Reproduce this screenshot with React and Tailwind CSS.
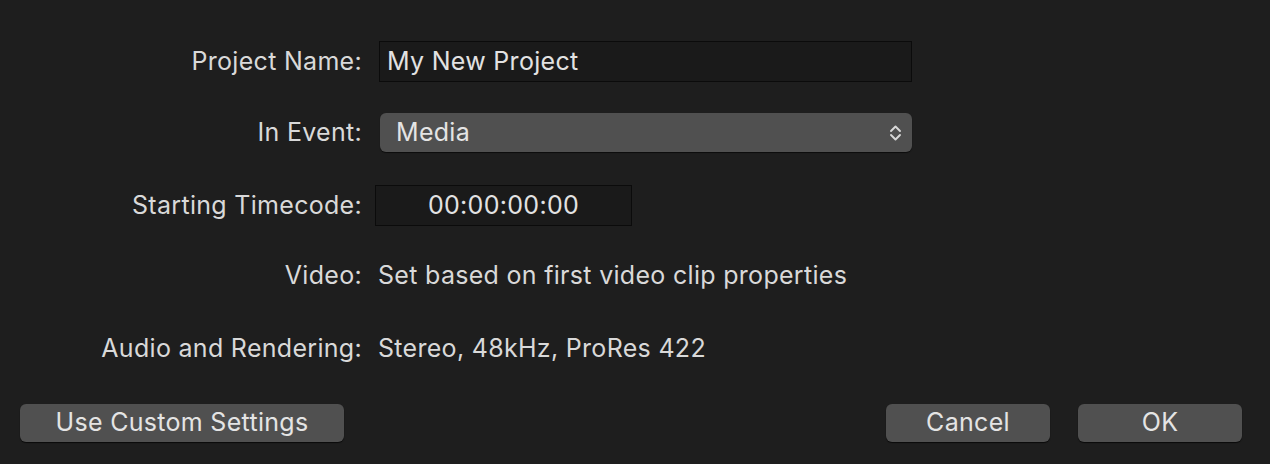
import React from 'react';

const font = { fontFamily: 'Inter, "Noto Sans", sans-serif' };

const Label = ({ children }) => (
  <div className="w-[362px] shrink-0 text-right text-[25px] tracking-[0.3px] text-[#d9d9d9]">{children}</div>
);

const App = () => {
  return (
    <div className="w-[1270px] h-[464px] bg-[#1e1e1e] relative overflow-hidden" style={font}>
      <div className="pt-[41px]">
        <div className="flex items-center h-[41px]">
          <Label>Project Name:</Label>
          <div className="ml-[17px] w-[533px] h-[41px] bg-[#1a1a1a] border border-[#0b0b0b] flex items-center pl-[7px] text-[25px] tracking-[0.3px] text-[#e2e2e2]">
            My New Project
          </div>
        </div>

        <div className="flex items-center h-[39px] mt-[31px]">
          <Label>In Event:</Label>
          <div className="ml-[18px] w-[532px] h-[39px] bg-[#505050] rounded-[6px] shadow-[0_1px_1px_rgba(0,0,0,0.6)] flex items-center justify-between pl-[16px] pr-[10px] text-[25px] tracking-[0.3px] text-[#e4e4e4]">
            <span>Media</span>
            <svg width="13" height="20" viewBox="0 0 13 20" fill="none" stroke="#d8d8d8" strokeWidth="1.9" strokeLinecap="round" strokeLinejoin="round">
              <path d="M2 8l4.5-4.5 4.5 4.5" />
              <path d="M2 12l4.5 4.5 4.5-4.5" />
            </svg>
          </div>
        </div>

        <div className="flex items-center h-[41px] mt-[33px]">
          <Label>Starting Timecode:</Label>
          <div className="ml-[13px] w-[257px] h-[41px] bg-[#1a1a1a] border border-[#0b0b0b] flex items-center justify-center text-[25px] tracking-[0.3px] text-[#e2e2e2]">
            00:00:00:00
          </div>
        </div>

        <div className="flex items-center h-[40px] mt-[30px]">
          <Label>Video:</Label>
          <div className="ml-[16px] text-[25px] tracking-[0.3px] text-[#d9d9d9]">Set based on first video clip properties</div>
        </div>

        <div className="flex items-center h-[40px] mt-[33px]">
          <Label>Audio and Rendering:</Label>
          <div className="ml-[16px] text-[25px] tracking-[0.3px] text-[#d9d9d9]">Stereo, 48kHz, ProRes 422</div>
        </div>
      </div>

      <div className="absolute left-0 right-0 top-[404px] flex items-center px-[20px]">
        <button className="w-[324px] h-[38px] bg-[#505050] rounded-[6px] shadow-[0_1px_1px_rgba(0,0,0,0.7)] text-[25px] tracking-[0.3px] text-[#e4e4e4]">
          Use Custom Settings
        </button>
        <div className="flex-1" />
        <button className="w-[164px] h-[38px] bg-[#505050] rounded-[6px] shadow-[0_1px_1px_rgba(0,0,0,0.7)] text-[25px] tracking-[0.3px] text-[#e4e4e4]">
          Cancel
        </button>
        <button className="ml-[28px] mr-[8px] w-[164px] h-[38px] bg-[#505050] rounded-[6px] shadow-[0_1px_1px_rgba(0,0,0,0.7)] text-[25px] tracking-[0.3px] text-[#e4e4e4]">
          OK
        </button>
      </div>
    </div>
  );
};

export default App;
